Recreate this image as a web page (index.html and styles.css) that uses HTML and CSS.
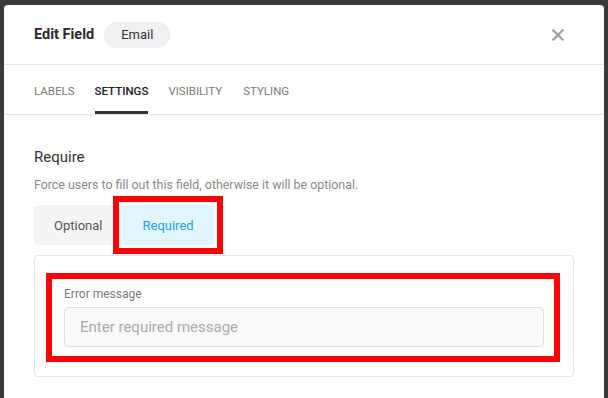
FILE: index.html
```html
<!DOCTYPE html>
<html lang="en">
<head>
    <meta charset="UTF-8">
    <meta name="viewport" content="width=device-width, initial-scale=1.0">
    <title>Edit Field</title>
    <link rel="stylesheet" href="styles.css">
</head>
<body>
    <div class="modal">
        <header class="modal-header">
            <h2 class="modal-title">Edit Field</h2>
            <span class="field-type">Email</span>
            <button class="close-button" aria-label="Close">
                <svg width="12" height="12" viewBox="0 0 12 12">
                    <path d="M1.5 1.5 L10.5 10.5 M10.5 1.5 L1.5 10.5" stroke="#a3a3a3" stroke-width="2.4" stroke-linecap="square"/>
                </svg>
            </button>
        </header>

        <nav class="tabs">
            <button class="tab">Labels</button>
            <button class="tab active">Settings</button>
            <button class="tab">Visibility</button>
            <button class="tab">Styling</button>
        </nav>

        <div class="modal-body">
            <h3 class="setting-title">Require</h3>
            <p class="setting-desc">Force users to fill out this field, otherwise it will be optional.</p>

            <div class="toggle-group">
                <button class="toggle">Optional</button>
                <span class="highlight">
                    <button class="toggle active">Required</button>
                </span>
            </div>

            <div class="sub-panel">
                <div class="field highlight-box">
                    <label class="field-label" for="errorMessage">Error message</label>
                    <input class="field-input" id="errorMessage" type="text" placeholder="Enter required message">
                </div>
            </div>
        </div>
    </div>
</body>
</html>
```

FILE: styles.css
```css
:root {
    --page-bg: #3a3a3a;
    --surface: #ffffff;
    --border: #e4e4e4;
    --text-dark: #2b2b2b;
    --text-muted: #8a8a8a;
    --accent: #1fa3e0;
    --accent-bg: #e1f5fe;
    --annotation: #ff0000;
}
* {
    box-sizing: border-box;
}
body {
    font-family: Roboto, 'Liberation Sans', sans-serif;
    background-color: var(--page-bg);
    margin: 0;
    padding: 5px 4px 0;
    height: 398px;
    overflow: hidden;
}
button {
    font-family: inherit;
    border: none;
    background: none;
    cursor: pointer;
    padding: 0;
}
.modal {
    width: 600px;
    min-height: 420px;
    background-color: var(--surface);
    border-radius: 4px 4px 0 0;
}
.modal-header {
    display: flex;
    align-items: center;
    height: 60px;
    padding: 0 30px;
    border-bottom: 1px solid var(--border);
}
.modal-title {
    margin: 0;
    font-size: 14.5px;
    font-weight: 700;
    color: var(--text-dark);
}
.field-type {
    margin-left: 10px;
    height: 26px;
    line-height: 26px;
    padding: 0 17px;
    border-radius: 13px;
    background-color: #f0f0f0;
    font-size: 13px;
    color: #333;
}
.close-button {
    margin-left: auto;
    width: 32px;
    height: 32px;
    display: flex;
    align-items: center;
    justify-content: center;
}
.tabs {
    display: flex;
    gap: 20px;
    height: 50px;
    padding: 0 30px;
    border-bottom: 1px solid var(--border);
}
.tab {
    height: 49px;
    font-size: 11.5px;
    text-transform: uppercase;
    color: #7a7a7a;
    border-bottom: 3px solid transparent;
    padding-top: 6px;
    margin-bottom: -1px;
}
.tab.active {
    color: #222;
    font-weight: 500;
    border-bottom-color: #333;
}
.tab:last-child {
    margin-left: 1px;
}
.modal-body {
    padding: 32px 30px 0;
}
.setting-title {
    margin: 0;
    font-size: 15px;
    line-height: 20px;
    font-weight: 400;
    color: #333;
}
.setting-desc {
    margin: 9px 0 0;
    font-size: 12.4px;
    line-height: 18px;
    color: var(--text-muted);
}
.toggle-group {
    display: inline-flex;
    margin-top: 11px;
    background-color: #f5f5f5;
    border-radius: 4px;
}
.toggle {
    height: 40px;
    padding: 0 20px;
    font-size: 13px;
    color: #555;
    border-radius: 4px;
}
.toggle.active {
    background-color: var(--accent-bg);
    color: var(--accent);
    padding: 0 20px;
}
.highlight {
    display: flex;
    outline: 6px solid var(--annotation);
    outline-offset: 3px;
}
.sub-panel {
    margin-top: 10px;
    border: 1px solid var(--border);
    border-radius: 4px;
    padding: 17px 13px 14px 11px;
}
.highlight-box {
    border: 6px solid var(--annotation);
}
.field {
    display: flex;
    flex-direction: column;
    padding: 7px 10px 9px 12px;
}
.field-label {
    font-size: 12px;
    line-height: 16px;
    color: #7a7a7a;
    margin-bottom: 5px;
}
.field-input {
    height: 40px;
    padding: 0 15px;
    border: 1px solid #dedede;
    border-radius: 4px;
    background-color: #f9f9f9;
    font-family: inherit;
    font-size: 15px;
    color: #333;
}
.field-input::placeholder {
    color: #ababab;
}
```
